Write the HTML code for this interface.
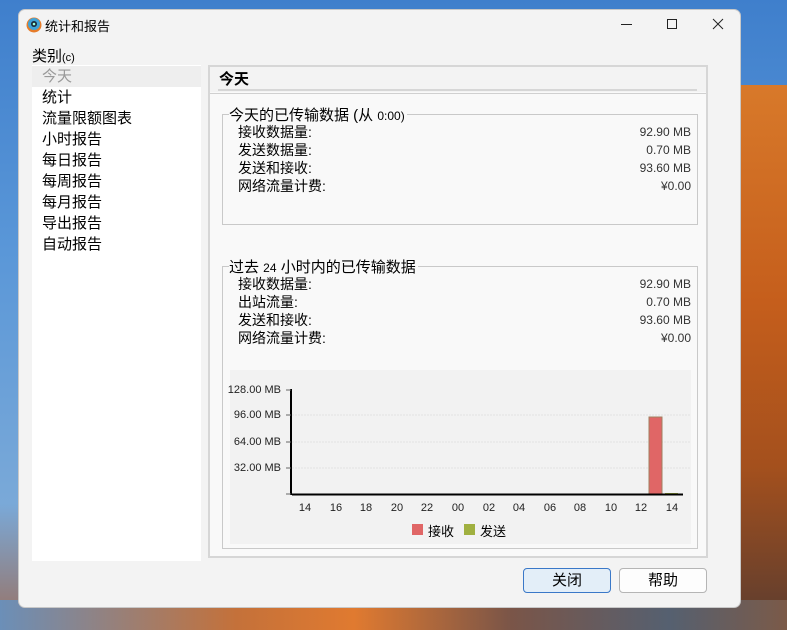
<!DOCTYPE html>
<html><head><meta charset="utf-8"><style>
*{margin:0;padding:0;box-sizing:border-box}
body{width:787px;height:630px;overflow:hidden;position:relative;font-family:"Liberation Sans","Noto Sans CJK SC",sans-serif;
background:linear-gradient(180deg,#3f7fcc 0%,#5a97d8 40%,#7aa9d8 80%,#9a7060 100%)}
.mtn{position:absolute;right:0;top:85px;width:60px;height:545px;background:linear-gradient(180deg,#d8792a,#c55e1c 40%,#a4501d 70%,#5a3c30)}
.bot{position:absolute;left:0;top:600px;width:787px;height:30px;background:linear-gradient(90deg,#6b8fb8,#c4713a 30%,#e07a30 45%,#7a5548 65%,#556070 85%,#7b5a48)}
.win{position:absolute;left:18px;top:9px;width:723px;height:599px;background:#f3f3f3;border:1px solid #c8c8c8;border-radius:7px;overflow:hidden}
.t{position:absolute;white-space:nowrap;color:#000}
.list{position:absolute;left:32px;top:65px;width:169px;height:496px;background:#fff}
.list div{height:21px;line-height:21px;padding-left:10px;font-size:15px}
.box{position:absolute;border:1px solid #c9c9c9}
.row{position:absolute;left:238px;font-size:14px;line-height:18px}
.val{position:absolute;right:96px;font-size:12px;line-height:18px;text-align:right;color:#333}
.btn{position:absolute;top:568px;width:88px;height:25px;border:1px solid #b5b5b5;border-radius:4px;background:#fdfdfd;text-align:center;line-height:23px;font-size:15px}
.yl{position:absolute;right:506px;font-size:11px;color:#222;font-family:"Liberation Sans",sans-serif}
.xl{position:absolute;top:502px;font-size:11px;color:#222;width:20px;text-align:center;margin-left:-10px}
</style></head><body>
<div class="mtn"></div><div class="bot"></div>
<div class="win"></div>
<svg style="position:absolute;left:26px;top:17px" width="16" height="16"><circle cx="8" cy="8" r="7.5" fill="#e67c2a"/><circle cx="8" cy="7" r="6" fill="#3fa3d8"/><circle cx="8" cy="7" r="3" fill="#1a2a3a"/><circle cx="8" cy="7" r="1.3" fill="#9fd"/></svg>
<div class="t" style="left:45px;top:16px;font-size:13px">统计和报告</div>
<svg style="position:absolute;left:0;top:0" width="787" height="40"><g stroke="#222" stroke-width="1" fill="none"><line x1="621" y1="24.5" x2="632" y2="24.5"/><rect x="667.5" y="19.5" width="9" height="9"/><path d="M713 19 L723 29 M723 19 L713 29"/></g></svg>
<div class="t" style="left:32px;top:45px;font-size:15px">类别<span style="font-size:11px">(c)</span></div>
<div class="list">
<div style="background:#eeeeee;color:#999;margin-top:1px">今天</div>
<div>统计</div><div>流量限额图表</div><div>小时报告</div><div>每日报告</div><div>每周报告</div><div>每月报告</div><div>导出报告</div><div>自动报告</div>
</div>
<div class="box" style="left:208px;top:65px;width:500px;height:493px;border:2px solid #d6d6d6;background:#f9f9f9"></div>
<div style="position:absolute;left:210px;top:67px;width:496px;height:25px;background:#f3f3f3"></div>
<div style="position:absolute;left:218px;top:89px;width:479px;height:2px;background:#d6d6d6"></div>
<div style="position:absolute;left:210px;top:93px;width:496px;height:1px;background:#d0d0d0"></div>
<div class="t" style="left:219px;top:68px;font-size:15px;font-weight:bold">今天</div>
<div class="box" style="left:222px;top:114px;width:476px;height:111px"></div>
<div class="t" style="left:229px;top:104px;font-size:15px;background:#f9f9f9;padding-right:2px">今天的已传输数据 (从 <span style="font-size:12px">0:00)</span></div>
<div class="row" style="top:123px">接收数据量:<br>发送数据量:<br>发送和接收:<br>网络流量计费:</div>
<div class="val" style="top:123px">92.90 MB<br>0.70 MB<br>93.60 MB<br>¥0.00</div>
<div class="box" style="left:222px;top:266px;width:476px;height:283px"></div>
<div class="t" style="left:229px;top:256px;font-size:15px;background:#f9f9f9;padding-right:2px">过去 <span style="font-size:12px">24</span> 小时内的已传输数据</div>
<div class="row" style="top:275px">接收数据量:<br>出站流量:<br>发送和接收:<br>网络流量计费:</div>
<div class="val" style="top:275px">92.90 MB<br>0.70 MB<br>93.60 MB<br>¥0.00</div>
<div style="position:absolute;left:230px;top:370px;width:461px;height:174px;background:#f2f2f2"></div>
<svg style="position:absolute;left:0;top:0" width="787" height="630">
<g stroke="#e2e2e2" stroke-dasharray="2,1"><line x1="292" y1="415" x2="691" y2="415"/><line x1="292" y1="442" x2="691" y2="442"/><line x1="292" y1="468" x2="691" y2="468"/></g>
<rect x="649" y="417" width="13" height="77" fill="#e06666" stroke="#a08060"/>
<rect x="665" y="493" width="13" height="1.5" fill="#a0b040"/>
<line x1="291" y1="389" x2="291" y2="495" stroke="#000" stroke-width="2"/>
<line x1="292" y1="494.5" x2="683" y2="494.5" stroke="#000" stroke-width="2"/>
<g stroke="#666"><line x1="286" y1="390" x2="291" y2="390"/><line x1="286" y1="415" x2="291" y2="415"/><line x1="286" y1="442" x2="291" y2="442"/><line x1="286" y1="468" x2="291" y2="468"/><line x1="286" y1="494" x2="291" y2="494"/></g>
<rect x="412" y="524" width="11" height="11" fill="#e06666"/><rect x="464" y="524" width="11" height="11" fill="#a0b040"/>
</svg>
<div class="yl" style="top:384px">128.00 MB</div>
<div class="yl" style="top:409px">96.00 MB</div>
<div class="yl" style="top:436px">64.00 MB</div>
<div class="yl" style="top:462px">32.00 MB</div>
<div class="xl" style="left:305px">14</div><div class="xl" style="left:336px">16</div><div class="xl" style="left:366px">18</div><div class="xl" style="left:397px">20</div><div class="xl" style="left:427px">22</div><div class="xl" style="left:458px">00</div><div class="xl" style="left:489px">02</div><div class="xl" style="left:519px">04</div><div class="xl" style="left:550px">06</div><div class="xl" style="left:580px">08</div><div class="xl" style="left:611px">10</div><div class="xl" style="left:641px">12</div><div class="xl" style="left:672px">14</div>
<div class="t" style="left:428px;top:521px;font-size:13px">接收</div>
<div class="t" style="left:480px;top:521px;font-size:13px">发送</div>
<div class="btn" style="left:523px;background:#e3eef8;border-color:#3a78c8">关闭</div>
<div class="btn" style="left:619px">帮助</div>
</body></html>
